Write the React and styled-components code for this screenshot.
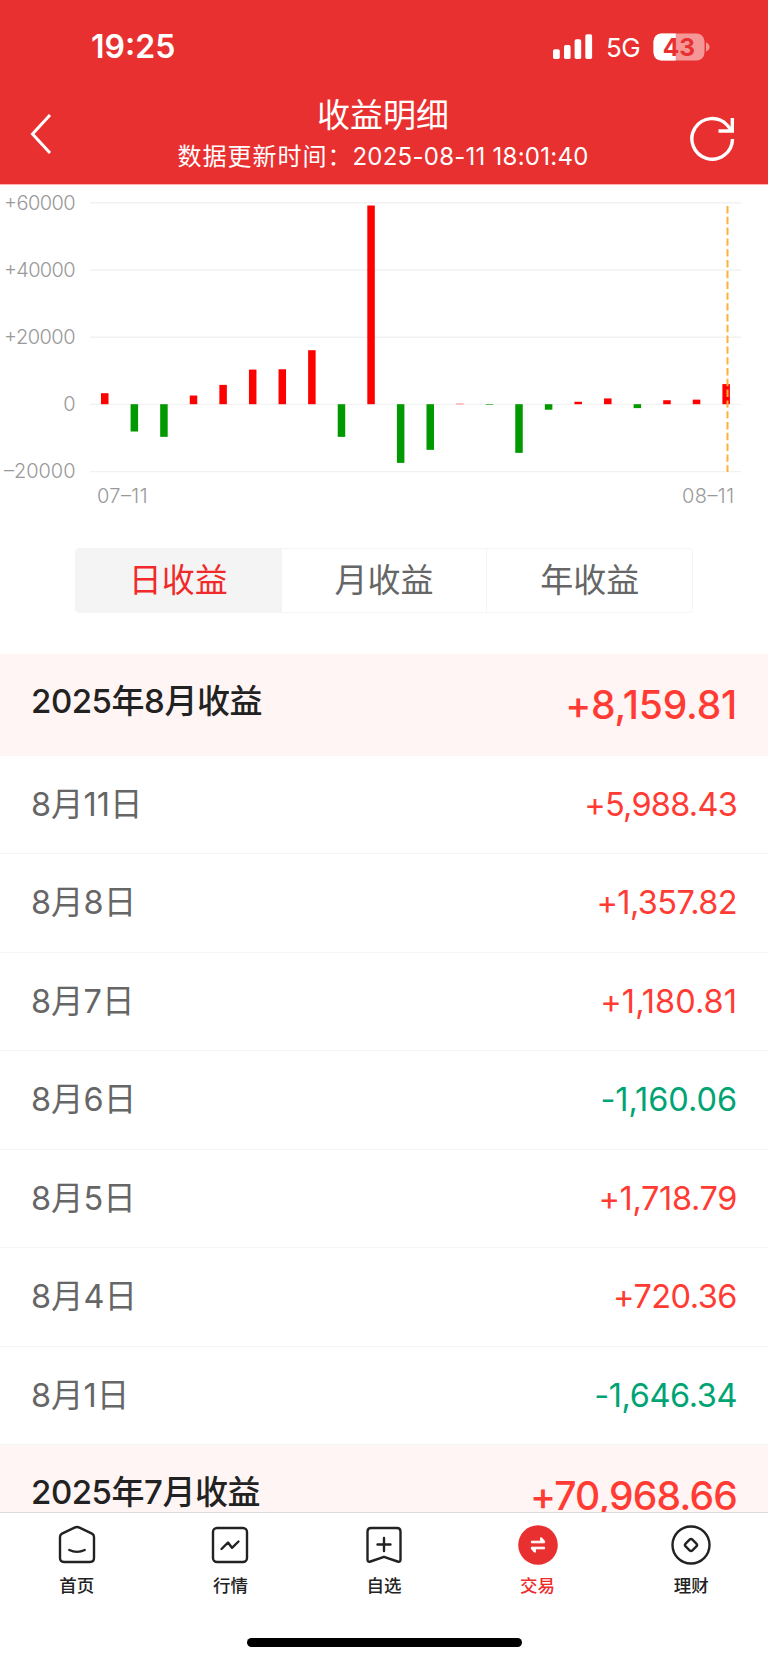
import React from "react";
import styled, { createGlobalStyle } from "styled-components";

const GlobalStyle = createGlobalStyle`
  * { box-sizing: border-box; }
  body { margin: 0; background: #fff; }
`;

const Screen = styled.div`
  width: 768px;
  height: 1662px;
  display: flex;
  flex-direction: column;
  overflow: hidden;
  background: #fff;
  font-family: "Inter", "Noto Sans CJK SC", sans-serif;
  color: #222;
`;

const Header = styled.header`
  flex: none;
  height: 185px;
  background: #e93030;
  border-bottom: 1px solid #ffb0b0;
  color: #fff;
`;

const StatusBar = styled.div`
  display: flex;
  justify-content: space-between;
  align-items: center;
  height: 92px;
  padding: 1px 58px 0 91px;
`;

const Clock = styled.div`
  padding-top: 1px;
  font-size: 32px;
  font-weight: 600;
  line-height: 40px;
`;

const StatusIcons = styled.div`
  display: flex;
  align-items: center;
`;

const Network = styled.span`
  width: 47px;
  margin-left: 13px;
  padding-top: 2px;
  font-size: 26px;
  line-height: 30px;
  letter-spacing: -0.5px;
`;

const TitleBar = styled.div`
  display: flex;
  justify-content: space-between;
  height: 92px;
  padding: 0 32px 0 30px;
`;

const Titles = styled.div`
  display: flex;
  flex-direction: column;
  align-items: center;
  padding-top: 1px;
`;

const Title = styled.h1`
  margin: 0;
  font-size: 33px;
  font-weight: 400;
  line-height: 44px;
`;

const Subtitle = styled.div`
  font-size: 24px;
  font-weight: 400;
  line-height: 39px;
  white-space: nowrap;
  letter-spacing: 1px;
`;

const Timestamp = styled.span`
  letter-spacing: 0.25px;
`;

const IconButton = styled.button`
  display: block;
  padding: 0;
  border: 0;
  background: none;
  color: inherit;
  width: 46px;
  height: 92px;
`;

const ChartArea = styled.section`
  flex: none;
  height: 363px;
  svg { display: block; }
`;

const Tabs = styled.div`
  flex: none;
  display: flex;
  width: 618px;
  height: 65px;
  margin: 0 0 41px 75px;
  border: 1px solid #f4f4f4;
  border-radius: 4px;
  overflow: hidden;
`;

const Tab = styled.button`
  flex: 1;
  padding: 0;
  border: 0;
  border-left: ${(p) => (p.$first ? "0" : "1px solid #f4f4f4")};
  background: ${(p) => (p.$active ? "#f4f4f4" : "#fff")};
  color: ${(p) => (p.$active ? "#f02a2a" : "#666")};
  font: 400 33px/63px "Inter", "Noto Sans CJK SC", sans-serif;
`;

const List = styled.main`
  flex: 1;
  min-height: 0;
  overflow: hidden;
`;

const MonthRow = styled.div`
  display: flex;
  justify-content: space-between;
  height: 101.5px;
  padding: 0 31px;
  background: #fff5f4;
`;

const MonthName = styled.div`
  font-size: 33px;
  font-weight: 500;
  line-height: 94px;
  letter-spacing: -0.45px;
`;

const MonthTotal = styled.div`
  font-size: 39px;
  font-weight: 500;
  line-height: 101px;
  letter-spacing: ${(p) => p.$tracking}px;
  color: #ff3b33;
`;

const DayRow = styled.div`
  display: flex;
  justify-content: space-between;
  height: 98.5px;
  padding: 0 31px;
  border-bottom: 1.5px solid #f4f4f4;
  line-height: 98px;
  font-size: 32.5px;
`;

const Day = styled.div`
  font-weight: 400;
  color: #666;
`;

const Amount = styled.div`
  letter-spacing: ${(p) => p.$tracking}px;
  color: ${(p) => (p.$down ? "#00a474" : "#ff3b33")};
`;

const NavBar = styled.nav`
  flex: none;
  display: flex;
  height: 114px;
  border-top: 1px solid #dcdcdc;
  padding-top: 12px;
`;

const NavItem = styled.a`
  flex: 1;
  display: flex;
  flex-direction: column;
  align-items: center;
  color: ${(p) => (p.$active ? "#ee2c2c" : "#222")};
  font-size: 17.5px;
  font-weight: 500;
  line-height: 26px;
  svg { margin-bottom: 8px; }
`;

const HomeArea = styled.div`
  flex: none;
  height: 36px;
  padding-top: 12px;
`;

const HomeIndicator = styled.div`
  width: 275px;
  height: 9px;
  margin: 0 auto;
  border-radius: 5px;
  background: #000;
`;

const values = [
  3270, -8130, -9720, 2580, 5750, 10300, 10400, 16070, -9720, 59130, -17460,
  -13590, 130, -180, -14480, -1646.34, 720.36, 1718.79, -1160.06, 1180.81,
  1357.82, 5988.43,
];
const ticks = [60000, 40000, 20000, 0, -20000];
const ZERO = 219.2;
const yOf = (v) => ZERO - (v * 67.2) / 20000;
const tickLabel = (v) => (v > 0 ? `+${v}` : v < 0 ? `–${-v}` : "0");

function Chart() {
  return (
    <svg width="768" height="330" viewBox="0 0 768 330">
      <g stroke="#f2f2f2" strokeWidth="1.4">
        {ticks.map((t) => (
          <line key={t} x1="90" x2="741" y1={yOf(t) + 0.2} y2={yOf(t) + 0.2} />
        ))}
      </g>
      <g fill="#999" fontSize="20" fontWeight="300">
        {ticks.map((t) => (
          <text
            key={t}
            x={t ? 4 : 75.5}
            y={yOf(t) + 7}
            textAnchor={t ? "start" : "end"}
            textLength={t ? 71.5 : undefined}
          >
            {tickLabel(t)}
          </text>
        ))}
        <text x="97" y="318.3" textLength="50.5">07–11</text>
        <text x="682" y="318.3" textLength="52">08–11</text>
      </g>
      {values.map((v, i) => (
        <rect
          key={i}
          x={101 + i * 29.59}
          width="7.5"
          y={Math.min(yOf(v), ZERO)}
          height={Math.abs(yOf(v) - ZERO)}
          fill={v > 0 ? "#f00" : "#090"}
        />
      ))}
      <line
        x1="727.5" x2="727.5" y1="21" y2="287"
        stroke="#ffb03a" strokeWidth="2" strokeDasharray="7.4 3.4"
      />
    </svg>
  );
}

function Signal() {
  return (
    <svg width="40" height="26" viewBox="0 0 40 26" fill="#fff">
      <rect x="0" y="15.3" width="6.8" height="9.7" rx="1.8" />
      <rect x="11" y="11" width="6.6" height="14" rx="1.8" />
      <rect x="21.6" y="5.3" width="6.6" height="19.7" rx="1.8" />
      <rect x="32.3" y="0.2" width="6.8" height="24.8" rx="1.8" />
    </svg>
  );
}

function Battery() {
  return (
    <svg width="57" height="36" viewBox="0 -4 57 36">
      <defs>
        <clipPath id="charge"><rect width="22.7" height="28" /></clipPath>
      </defs>
      <rect x="0.5" y="0.5" width="51" height="27" rx="8" fill="#f69797" />
      <rect x="0.5" y="0.5" width="51" height="27" rx="8" fill="#fff" clipPath="url(#charge)" />
      <path d="M53 9.5 Q56.5 11 56.5 14 Q56.5 17 53 18.5 Z" fill="#f69797" />
      <text x="26" y="22.6" textAnchor="middle" fontSize="24.5" fontWeight="700" fill="#e93030">43</text>
    </svg>
  );
}

const stroke = {
  fill: "none",
  stroke: "currentColor",
  strokeWidth: 2.4,
  strokeLinecap: "round",
  strokeLinejoin: "round",
};

const icons = {
  home: (
    <g {...stroke}>
      <path d="M17.5 2.6 Q20 1.4 22.5 2.6 L35 8.6 Q37 9.7 37 12 V33 Q37 37 33 37 H7 Q3 37 3 33 V12 Q3 9.7 5 8.6 Z" />
      <path d="M12.300 25 Q20 28.800 27.700 25" />
    </g>
  ),
  market: (
    <g {...stroke}>
      <rect x="3" y="3" width="34" height="34" rx="4" />
      <path d="M11.5 24 L18 17.5 L22 22.8 L28.5 16.5" />
    </g>
  ),
  watch: (
    <g {...stroke}>
      <path d="M7 3 H33 Q36.500 3 36.500 6.500 V34.500 Q36.500 37.500 33.500 36.500 L20 31.800 L6.500 36.500 Q3.500 37.500 3.500 34.500 V6.500 Q3.500 3 7 3 Z" />
      <path d="M20 13 V26 M13.500 19.500 H26.500" />
    </g>
  ),
  trade: (
    <g>
      <circle cx="20" cy="20" r="19.8" fill="#e93030" />
      <g fill="#fff" stroke="#fff" strokeWidth="1" strokeLinejoin="round">
        <path d="M13.4 16.2 H22.600 V12.800 H23.600 L26.600 16.200 V17.800 H13.400 Z" />
        <path d="M26.600 23.800 H17.400 V27.200 H16.400 L13.400 23.800 V22.200 H26.600 Z" />
      </g>
    </g>
  ),
  wealth: (
    <g {...stroke}>
      <circle cx="20" cy="20" r="18.5" />
      <rect x="15.2" y="15.2" width="9.6" height="9.6" rx="2" transform="rotate(45 20 20)" />
    </g>
  ),
};

const navItems = [
  ["home", "首页"],
  ["market", "行情"],
  ["watch", "自选"],
  ["trade", "交易"],
  ["wealth", "理财"],
];

// date, amount, letter spacing of the amount
const days = [
  ["8月11日", "+5,988.43", -0.75],
  ["8月8日", "+1,357.82", -0.6],
  ["8月7日", "+1,180.81", 0.05],
  ["8月6日", "-1,160.06", -0.05],
  ["8月5日", "+1,718.79", -0.35],
  ["8月4日", "+720.36", -0.5],
  ["8月1日", "-1,646.34", -0.4],
];

export default function App() {
  return (
    <Screen>
      <GlobalStyle />
      <Header>
        <StatusBar>
          <Clock>19:25</Clock>
          <StatusIcons>
            <Signal />
            <Network>5G</Network>
            <Battery />
          </StatusIcons>
        </StatusBar>
        <TitleBar>
          <IconButton aria-label="返回">
            <svg width="46" height="92" viewBox="0 0 46 92">
              <path d="M20 23 L2.5 42 L20 61" fill="none" stroke="#fff" strokeWidth="3" />
            </svg>
          </IconButton>
          <Titles>
            <Title>收益明细</Title>
            <Subtitle>
              数据更新时间：<Timestamp>2025-08-11 18:01:40</Timestamp>
            </Subtitle>
          </Titles>
          <IconButton aria-label="刷新">
            <svg width="46" height="92" viewBox="0 0 46 92" fill="none" stroke="#fff" strokeWidth="3.4">
              <path d="M42.500 47 A20.300 20.300 0 1 1 37.500 33.500 L41.500 38.500" />
              <path d="M42.300 26 V39 H28.500" />
            </svg>
          </IconButton>
        </TitleBar>
      </Header>
      <ChartArea>
        <Chart />
      </ChartArea>
      <Tabs>
        <Tab $first $active>日收益</Tab>
        <Tab>月收益</Tab>
        <Tab>年收益</Tab>
      </Tabs>
      <List>
        <MonthRow>
          <MonthName>2025年8月收益</MonthName>
          <MonthTotal $tracking={-0.2}>+8,159.81</MonthTotal>
        </MonthRow>
        {days.map(([day, amount, tracking]) => (
          <DayRow key={day}>
            <Day>{day}</Day>
            <Amount $down={amount[0] === "-"} $tracking={tracking}>{amount}</Amount>
          </DayRow>
        ))}
        <MonthRow>
          <MonthName>2025年7月收益</MonthName>
          <MonthTotal $tracking={-0.8}>+70,968.66</MonthTotal>
        </MonthRow>
      </List>
      <NavBar>
        {navItems.map(([icon, label]) => (
          <NavItem key={icon} $active={icon === "trade"}>
            <svg width="40" height="40" viewBox="0 0 40 40">{icons[icon]}</svg>
            {label}
          </NavItem>
        ))}
      </NavBar>
      <HomeArea>
        <HomeIndicator />
      </HomeArea>
    </Screen>
  );
}
